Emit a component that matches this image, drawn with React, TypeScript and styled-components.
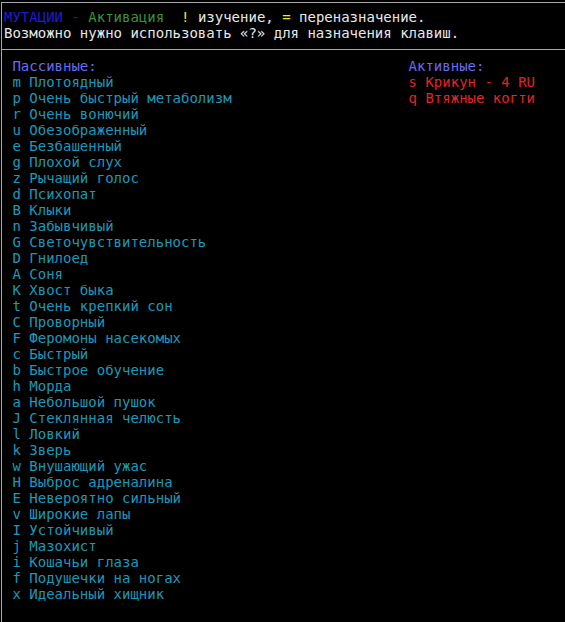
import React, { FC } from 'react';
import styled, { createGlobalStyle } from 'styled-components';

interface Mutation {
	key: string;
	name: string;
}

const passive: Mutation[] = [
	{ key: 'm', name: 'Плотоядный' },
	{ key: 'p', name: 'Очень быстрый метаболизм' },
	{ key: 'r', name: 'Очень вонючий' },
	{ key: 'u', name: 'Обезображенный' },
	{ key: 'e', name: 'Безбашенный' },
	{ key: 'g', name: 'Плохой слух' },
	{ key: 'z', name: 'Рычащий голос' },
	{ key: 'd', name: 'Психопат' },
	{ key: 'B', name: 'Клыки' },
	{ key: 'n', name: 'Забывчивый' },
	{ key: 'G', name: 'Светочувствительность' },
	{ key: 'D', name: 'Гнилоед' },
	{ key: 'A', name: 'Соня' },
	{ key: 'K', name: 'Хвост быка' },
	{ key: 't', name: 'Очень крепкий сон' },
	{ key: 'C', name: 'Проворный' },
	{ key: 'F', name: 'Феромоны насекомых' },
	{ key: 'c', name: 'Быстрый' },
	{ key: 'b', name: 'Быстрое обучение' },
	{ key: 'h', name: 'Морда' },
	{ key: 'a', name: 'Небольшой пушок' },
	{ key: 'J', name: 'Стеклянная челюсть' },
	{ key: 'l', name: 'Ловкий' },
	{ key: 'k', name: 'Зверь' },
	{ key: 'w', name: 'Внушающий ужас' },
	{ key: 'H', name: 'Выброс адреналина' },
	{ key: 'E', name: 'Невероятно сильный' },
	{ key: 'v', name: 'Широкие лапы' },
	{ key: 'I', name: 'Устойчивый' },
	{ key: 'j', name: 'Мазохист' },
	{ key: 'i', name: 'Кошачьи глаза' },
	{ key: 'f', name: 'Подушечки на ногах' },
	{ key: 'x', name: 'Идеальный хищник' },
];

const active: Mutation[] = [
	{ key: 's', name: 'Крикун - 4 RU' },
	{ key: 'q', name: 'Втяжные когти' },
];

const GlobalStyle = createGlobalStyle`
	html, body {
		margin: 0;
		padding: 0;
		background: #000;
	}
`;

const Screen = styled.div`
	width: 565px;
	height: 622px;
	overflow: hidden;
	background: #000;
	font-family: 'DejaVu Sans Mono', 'Liberation Mono', monospace;
	font-size: 14px;
	line-height: 16px;
	white-space: pre;
	color: #e8e8e8;
`;

const Frame = styled.div`
	margin: 2px 0 0 1px;
	height: 620px;
	border-top: 1px solid #a8a8a8;
	border-left: 1px solid #a8a8a8;
	box-sizing: border-box;
`;

const Header = styled.div`
	padding: 6px 0 8px 2px;
	border-bottom: 1px solid #a8a8a8;
`;

const Line = styled.div`
	height: 16px;
`;

const Tint = styled.span<{ $color: string }>`
	color: ${(p) => p.$color};
`;

const Columns = styled.div`
	display: grid;
	grid-template-columns: 47ch auto;
	padding: 8px 0 0 calc(2px + 1ch);
`;

const Column = styled.div`
	display: flex;
	flex-direction: column;
`;

const Title = styled.div`
	color: #6a6af2;
	height: 16px;
`;

const Item = styled.div<{ $color: string }>`
	color: ${(p) => p.$color};
	height: 16px;
`;

const MutationList: FC<{ title: string; items: Mutation[]; color: string }> = ({ title, items, color }) => (
	<Column>
		<Title>{title}</Title>
		{items.map((m) => (
			<Item key={m.key} $color={color}>{`${m.key} ${m.name}`}</Item>
		))}
	</Column>
);

const App: FC = () => (
	<Screen>
		<GlobalStyle />
		<Frame>
			<Header>
				<Line>
					<Tint $color='#1c1cd4'>МУТАЦИИ - </Tint>
					<Tint $color='#3a923a'>Активация</Tint>
					{'  '}
					<Tint $color='#e8e83a'>!</Tint>
					{' изучение, '}
					<Tint $color='#e8e83a'>=</Tint>
					{' переназначение.'}
				</Line>
				<Line>Возможно нужно использовать «?» для назначения клавиш.</Line>
			</Header>
			<Columns>
				<MutationList title='Пассивные:' items={passive} color='#1e98b8' />
				<MutationList title='Активные:' items={active} color='#e02626' />
			</Columns>
		</Frame>
	</Screen>
);

export default App;
